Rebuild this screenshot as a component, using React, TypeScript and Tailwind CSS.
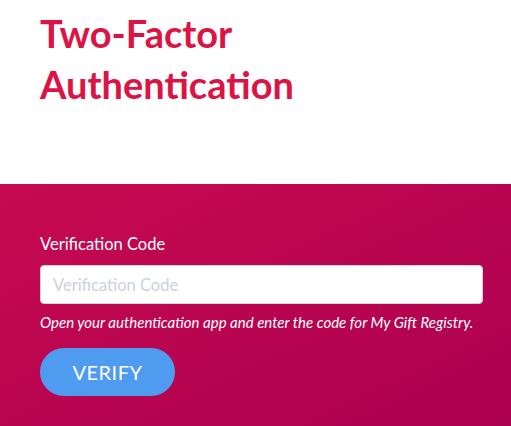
import React from "react";

const App = () => {
  return (
    <div className="w-[511px] h-[426px] overflow-hidden bg-white font-['Lato',sans-serif]">
      <div className="h-[184px] px-[40px] pt-[8px]">
        <h1 className="text-[#dc1446] font-bold text-[38px] leading-[51px]">
          Two-Factor
          <br />
          Authentication
        </h1>
      </div>
      <div className="h-[242px] bg-gradient-to-br from-[#c70a50] to-[#ac0050] px-[40px] pt-[50px]">
        <label className="block text-white text-[16.5px] leading-[20px]">Verification Code</label>
        <input
          className="mt-[11px] block w-[443px] h-[39px] rounded-[4px] border border-[#cfd4da] bg-white px-[12px] text-[16.5px] text-gray-700 placeholder:text-[#ccd2da] outline-none"
          placeholder="Verification Code"
        />
        <p className="mt-[8px] text-white italic text-[15px] leading-[20px] whitespace-nowrap">
          Open your authentication app and enter the code for My Gift Registry.
        </p>
        <button className="mt-[16px] w-[135px] h-[48px] rounded-full bg-[#4f9bef] text-white text-[20px] tracking-[0.5px]">
          VERIFY
        </button>
      </div>
    </div>
  );
};

export default App;
